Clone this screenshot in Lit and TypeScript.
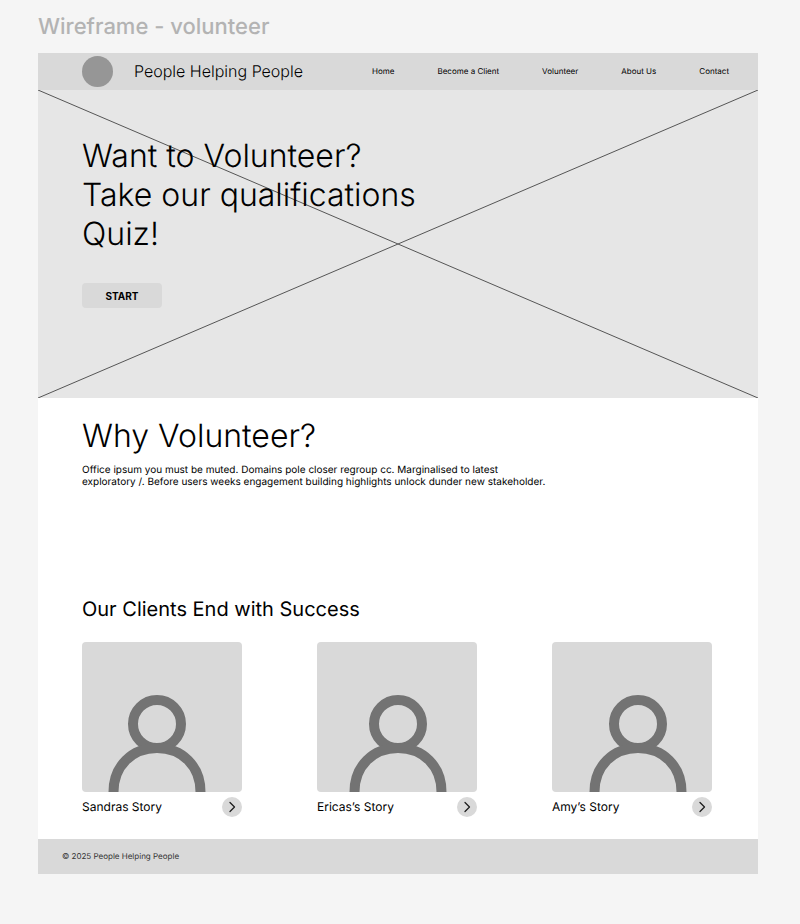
import { LitElement, html, css } from "lit";
import { customElement, property } from "lit/decorators.js";

interface Story {
  name: string;
  shift: number;
}

const NAV = ["Home", "Become a Client", "Volunteer", "About Us", "Contact"];

// shift: horizontal centre of the figure inside its 160-unit picture
const STORIES: Story[] = [
  { name: "Sandras Story", shift: 75 },
  { name: "Ericas’s Story", shift: 81 },
  { name: "Amy’s Story", shift: 86 },
];

@customElement("story-card")
export class StoryCard extends LitElement {
  @property() name = "";
  @property({ type: Number }) shift = 80;

  static styles = css`
    :host {
      display: block;
      width: 160px;
    }
    .picture {
      display: block;
      width: 100%;
      border-radius: 4px;
      background: #d9d9d9;
    }
    .figure {
      fill: none;
      stroke: #737373;
      stroke-width: 10;
    }
    .row {
      display: flex;
      align-items: center;
      justify-content: space-between;
      margin-top: 5px;
    }
    .name {
      margin: 0;
      font-size: 12px;
      line-height: 20px;
      font-weight: 400;
    }
    .more {
      display: grid;
      place-items: center;
      width: 20px;
      height: 20px;
      padding: 0;
      border: 0;
      border-radius: 50%;
      background: #d9d9d9;
      cursor: pointer;
    }
    .chevron {
      fill: none;
      stroke: #1e1e1e;
      stroke-width: 1.3;
      stroke-linecap: round;
      stroke-linejoin: round;
    }
  `;

  render() {
    return html`
      <svg class="picture" viewBox="0 0 160 150" role="img" aria-label="Portrait placeholder">
        <g class="figure" transform="translate(${this.shift} 0)">
          <circle cx="0" cy="82" r="24"></circle>
          <path d="M-43.5 150.5V150C-43.5 124 -25 106 0 106S43.5 124 43.5 150V150.5"></path>
        </g>
      </svg>
      <div class="row">
        <h3 class="name">${this.name}</h3>
        <button class="more" type="button" aria-label=${`Open ${this.name}`}>
          <svg class="chevron" width="20" height="20" viewBox="0 0 20 20" aria-hidden="true">
            <path d="M8 5.5L12.5 10L8 14.5"></path>
          </svg>
        </button>
      </div>
    `;
  }
}

@customElement("app-root")
export class AppRoot extends LitElement {
  static styles = css`
    :host {
      display: block;
      box-sizing: border-box;
      min-height: 100vh;
      padding: 13px 42px 50px 38px;
      background: #f5f5f5;
      color: #000;
      font-family: Inter, "Liberation Sans", sans-serif;
      text-rendering: geometricPrecision;
    }
    .label {
      margin: 0 0 12px;
      font-size: 22px;
      line-height: 28px;
      font-weight: 450;
      color: #b3b3b3;
    }
    .frame {
      background: #fff;
    }
    .bar {
      display: flex;
      align-items: center;
      justify-content: space-between;
      box-sizing: border-box;
      height: 37px;
      padding: 0 29px 1px 44px;
      background: #d9d9d9;
    }
    .brand {
      display: flex;
      align-items: center;
      gap: 21px;
      font-size: 16px;
      line-height: 20px;
      font-weight: 300;
    }
    .logo {
      width: 31px;
      height: 31px;
      border-radius: 50%;
      background: #969696;
    }
    .nav {
      display: flex;
      gap: 43px;
    }
    .link {
      font-size: 8px;
      line-height: 10px;
      color: inherit;
      text-decoration: none;
      white-space: nowrap;
    }
    .hero {
      display: grid;
      background: #e6e6e6;
    }
    .cross,
    .pitch {
      grid-area: 1 / 1;
    }
    .cross {
      width: 100%;
      height: 100%;
      min-height: 0;
      stroke: #555;
      stroke-width: 1;
    }
    .pitch {
      z-index: 1;
      padding: 46px 46px 90px 44px;
    }
    .display {
      margin: 0;
      max-width: 400px;
      font-size: 32px;
      line-height: 39px;
      font-weight: 300;
    }
    .start {
      display: block;
      width: 80px;
      height: 25px;
      margin-top: 30px;
      padding: 0;
      border: 0;
      border-radius: 4px;
      background: #d9d9d9;
      color: #000;
      font: 700 10px/12px Inter, "Liberation Sans", sans-serif;
      cursor: pointer;
    }
    .content {
      padding: 18px 46px 22px 44px;
    }
    .copy {
      margin: 9px 0 0;
      max-width: 480px;
      font-size: 10px;
      line-height: 12px;
    }
    .subhead {
      margin: 108px 0 20px;
      font-size: 20px;
      line-height: 26px;
      font-weight: 400;
    }
    .cards {
      display: flex;
      flex-wrap: wrap;
      justify-content: space-between;
      gap: 24px;
    }
    .footer {
      padding: 12px 24px 13px;
      background: #d9d9d9;
      color: #333;
      font-size: 8px;
      line-height: 10px;
    }
  `;

  render() {
    return html`
      <p class="label">Wireframe - volunteer</p>
      <div class="frame">
        <header class="bar">
          <div class="brand"><span class="logo"></span>People Helping People</div>
          <nav class="nav">
            ${NAV.map((item) => html`<a class="link" href="#">${item}</a>`)}
          </nav>
        </header>
        <section class="hero">
          <svg class="cross" aria-hidden="true">
            <line x1="0" y1="0" x2="100%" y2="100%"></line>
            <line x1="0" y1="100%" x2="100%" y2="0"></line>
          </svg>
          <div class="pitch">
            <h1 class="display">Want to Volunteer?<br />Take our qualifications<br />Quiz!</h1>
            <button class="start" type="button">START</button>
          </div>
        </section>
        <main class="content">
          <h2 class="display">Why Volunteer?</h2>
          <p class="copy">
            Office ipsum you must be muted. Domains pole closer regroup cc. Marginalised to latest<br />
            exploratory /. Before users weeks engagement building highlights unlock dunder new stakeholder.
          </p>
          <h2 class="subhead">Our Clients End with Success</h2>
          <div class="cards">
            ${STORIES.map(
              (s) => html`<story-card .name=${s.name} .shift=${s.shift}></story-card>`,
            )}
          </div>
        </main>
        <footer class="footer">© 2025 People Helping People</footer>
      </div>
    `;
  }
}
